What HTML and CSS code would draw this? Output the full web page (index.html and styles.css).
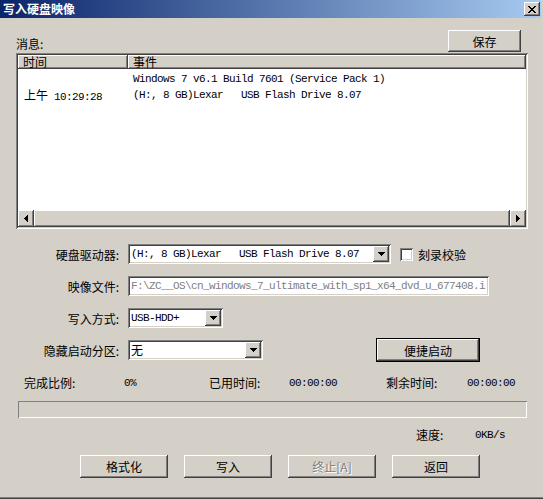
FILE: index.html
```html
<html lang="zh-CN">
  <head>
    <meta charset="UTF-8" />
    <title>写入硬盘映像</title>
    <link rel="stylesheet" href="styles.css">
  </head>
  <body>
    <div class="window">
      <!-- title bar -->
      <div class="titlebar">
        <span class="title">写入硬盘映像</span>
        <span class="close">
          <svg width="8" height="7" viewBox="0 0 8 7"><path d="M0 0h2v1H0z M6 0h2v1H6z M1 1h2v1H1z M5 1h2v1H5z M2 2h4v1H2z M3 3h2v1H3z M2 4h4v1H2z M1 5h2v1H1z M5 5h2v1H5z M0 6h2v1H0z M6 6h2v1H6z" fill="#000"/></svg>
        </span>
      </div>

      <div class="content">
        <!-- messages -->
        <div class="msg-row">
          <span class="msg-label">消息:</span>
          <button class="btn save-btn">保存</button>
        </div>
        <div class="list">
          <div class="list-header">
            <div class="head-cell col-time">时间</div>
            <div class="head-cell col-event">事件</div>
          </div>
          <div class="list-rows">
            <div class="list-row">
              <div class="col-time"></div>
              <div class="col-event mono">Windows 7 v6.1 Build 7601 (Service Pack 1)</div>
            </div>
            <div class="list-row">
              <div class="col-time">上午<span class="mono"> 10:29:28</span></div>
              <div class="col-event mono">(H:, 8 GB)Lexar   USB Flash Drive 8.07</div>
            </div>
          </div>
          <div class="hscroll">
            <span class="scroll-btn">
              <svg width="4" height="7" viewBox="0 0 4 7"><path d="M3 0h1v7H3z M2 1h1v5H2z M1 2h1v3H1z M0 3h1v1H0z" fill="#000"/></svg>
            </span>
            <span class="scroll-thumb"></span>
            <span class="scroll-btn">
              <svg width="4" height="7" viewBox="0 0 4 7"><path d="M0 0h1v7H0z M1 1h1v5H1z M2 2h1v3H2z M3 3h1v1H3z" fill="#000"/></svg>
            </span>
          </div>
        </div>

        <!-- settings -->
        <div class="field-row first">
          <label class="field-label">硬盘驱动器:</label>
          <div class="combo drive-combo">
            <span class="combo-text mono">(H:, 8 GB)Lexar   USB Flash Drive 8.07</span>
            <span class="drop"><svg width="7" height="4" viewBox="0 0 7 4"><path d="M0 0h7v1H0z M1 1h5v1H1z M2 2h3v1H2z M3 3h1v1H3z" fill="#000"/></svg></span>
          </div>
          <span class="checkbox"></span>
          <span class="check-label">刻录校验</span>
        </div>
        <div class="field-row">
          <label class="field-label">映像文件:</label>
          <div class="textbox mono">F:\ZC__OS\cn_windows_7_ultimate_with_sp1_x64_dvd_u_677408.i</div>
        </div>
        <div class="field-row">
          <label class="field-label">写入方式:</label>
          <div class="combo mode-combo">
            <span class="combo-text mono">USB-HDD+</span>
            <span class="drop"><svg width="7" height="4" viewBox="0 0 7 4"><path d="M0 0h7v1H0z M1 1h5v1H1z M2 2h3v1H2z M3 3h1v1H3z" fill="#000"/></svg></span>
          </div>
        </div>
        <div class="field-row">
          <label class="field-label">隐藏启动分区:</label>
          <div class="combo hide-combo">
            <span class="combo-text">无</span>
            <span class="drop"><svg width="7" height="4" viewBox="0 0 7 4"><path d="M0 0h7v1H0z M1 1h5v1H1z M2 2h3v1H2z M3 3h1v1H3z" fill="#000"/></svg></span>
          </div>
          <button class="btn default-btn">便捷启动</button>
        </div>

        <!-- progress -->
        <div class="stats">
          <span>完成比例:</span>
          <span class="mono">0%</span>
          <span>已用时间:</span>
          <span class="mono">00:00:00</span>
          <span>剩余时间:</span>
          <span class="mono">00:00:00</span>
        </div>
        <div class="progress"></div>
        <div class="speed">
          <span class="speed-label">速度:</span>
          <span class="mono">0KB/s</span>
        </div>

        <div class="actions">
          <button class="btn action-btn">格式化</button>
          <button class="btn action-btn">写入</button>
          <button class="btn action-btn disabled">终止[A]</button>
          <button class="btn action-btn">返回</button>
        </div>
      </div>
    </div>
  </body>
</html>
```

FILE: styles.css
```css
/* page */
body {
  margin: 0;
  padding: 0;
  background-color: #d4d0c8;
}

.window {
  width: 543px;
  height: 499px;
  box-sizing: border-box;
  background-color: #d4d0c8;
  font-family: "Noto Sans CJK SC", sans-serif;
  font-size: 12px;
  color: #000;
  box-shadow: inset 0 -1px #404040, inset 0 -2px #808080;
}

.mono {
  font-family: "Liberation Mono", monospace;
  font-size: 11px;
  letter-spacing: -0.6px;
  white-space: pre;
}

/* title bar */
.titlebar {
  height: 18px;
  margin-right: 2px;
  padding-left: 3px;
  display: flex;
  align-items: center;
  background: linear-gradient(to right, #0a246a, #a6caf0);
}

.title {
  color: #fff;
  font-weight: bold;
  line-height: 18px;
}

.close {
  margin-left: auto;
  margin-right: 1px;
  width: 16px;
  height: 14px;
  display: flex;
  align-items: center;
  justify-content: center;
  background-color: #d4d0c8;
  box-shadow: inset -1px -1px #404040, inset 1px 1px #fff,
    inset -2px -2px #808080;
}

/* shared controls */
.btn {
  border: none;
  padding: 0;
  margin: 0;
  font-family: "Noto Sans CJK SC", sans-serif;
  font-size: 12px;
  color: #000;
  background-color: #d4d0c8;
  box-shadow: inset -1px -1px #404040, inset 1px 1px #fff,
    inset -2px -2px #808080;
}

.btn.disabled {
  color: #808080;
  text-shadow: 1px 1px #fff;
}

.default-btn {
  box-shadow: inset 0 0 0 1px #000, inset -2px -2px #404040,
    inset 2px 2px #fff, inset -3px -3px #808080;
}

.combo,
.textbox,
.list,
.checkbox {
  box-shadow: inset 1px 1px #808080, inset -1px -1px #fff,
    inset 2px 2px #404040, inset -2px -2px #d4d0c8;
}

/* content */
.content {
  padding-left: 16px;
}

.msg-row {
  width: 512px;
  height: 22px;
  margin-top: 12px;
  display: flex;
  align-items: flex-end;
}

.msg-label {
  line-height: 17px;
}

.save-btn {
  margin-left: auto;
  margin-right: 7px;
  width: 73px;
  height: 22px;
}

/* list */
.list {
  width: 512px;
  height: 176px;
  margin-top: 1px;
  box-sizing: border-box;
  padding: 2px;
  background-color: #fff;
  display: flex;
  flex-direction: column;
}

.list-header {
  height: 14px;
  display: flex;
}

.head-cell {
  line-height: 14px;
  background-color: #d4d0c8;
  box-shadow: inset -1px -1px #404040, inset 1px 1px #fff,
    inset -2px -2px #808080;
}

.col-time {
  width: 110px;
  box-sizing: border-box;
  padding-left: 5px;
}

.col-event {
  flex: 1;
  padding-left: 5px;
}

.list-rows {
  flex: 1;
  padding-top: 2px;
}

.list-row {
  height: 16px;
  line-height: 16px;
  display: flex;
}

.list-row .col-time {
  padding-left: 6px;
}

.hscroll {
  height: 17px;
  display: flex;
}

.scroll-btn,
.scroll-thumb {
  background-color: #d4d0c8;
  box-shadow: inset -1px -1px #404040, inset 1px 1px #fff,
    inset -2px -2px #808080;
}

.scroll-btn {
  width: 16px;
  display: flex;
  align-items: center;
  justify-content: center;
}

.scroll-thumb {
  flex: 1;
}

/* fields */
.field-row {
  height: 20px;
  margin-top: 12px;
  display: flex;
  align-items: center;
}

.field-row.first {
  margin-top: 15px;
}

.field-label {
  width: 107px;
  box-sizing: border-box;
  padding-right: 4px;
  margin-right: 5px;
  text-align: right;
}

.combo {
  height: 20px;
  box-sizing: border-box;
  padding: 2px;
  background-color: #fff;
  display: flex;
}

.combo-text {
  flex: 1;
  padding-left: 1px;
  line-height: 16px;
  overflow: hidden;
}

.drop {
  width: 16px;
  height: 16px;
  display: flex;
  align-items: center;
  justify-content: center;
  background-color: #d4d0c8;
  box-shadow: inset -1px -1px #404040, inset 1px 1px #fff,
    inset -2px -2px #808080;
}

.drive-combo {
  width: 263px;
}

.mode-combo {
  width: 95px;
}

.hide-combo {
  width: 135px;
}

.checkbox {
  width: 13px;
  height: 13px;
  margin-left: 9px;
  background-color: #fff;
}

.check-label {
  margin-left: 5px;
}

.textbox {
  width: 361px;
  height: 20px;
  box-sizing: border-box;
  padding: 2px 3px;
  line-height: 16px;
  background-color: #fff;
  color: #808080;
  overflow: hidden;
}

.default-btn {
  width: 104px;
  height: 24px;
  margin-left: 113px;
}

/* progress */
.stats {
  height: 16px;
  margin-top: 15px;
  padding-left: 8px;
  display: grid;
  grid-template-columns: 100px 85px 80px 97px 81px auto;
  line-height: 16px;
}

.progress {
  width: 509px;
  height: 17px;
  margin-top: 10px;
  margin-left: 2px;
  box-shadow: inset 1px 1px #808080, inset -1px -1px #fff;
}

.speed {
  height: 16px;
  margin-top: 9px;
  margin-left: 400px;
  display: flex;
  line-height: 16px;
}

.speed-label {
  width: 59px;
}

.actions {
  margin-top: 12px;
  margin-left: 64px;
  display: flex;
  gap: 16px;
}

.action-btn {
  width: 88px;
  height: 23px;
}
```
